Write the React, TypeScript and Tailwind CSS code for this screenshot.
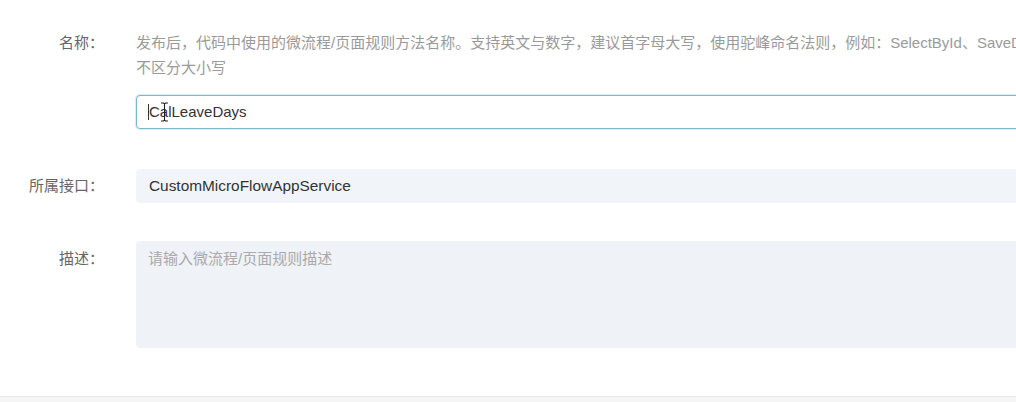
import React from 'react';

const fontStack = { fontFamily: '"Liberation Sans", "Noto Sans CJK SC", sans-serif' };

const Label: React.FC<{ text: string; className?: string }> = ({ text, className }) => (
  <div className={`w-[104px] shrink-0 text-right text-[15px] text-[#666] ${className ?? ''}`}>{text}</div>
);

// mouse text cursor hovering over the name input
const IBeam: React.FC = () => (
  <svg className="absolute left-[23px] top-[6px]" width="9" height="20" viewBox="0 0 9 20" fill="none">
    <path d="M1 1h2.5L4.5 2 5.5 1H8M4.5 2v16M1 19h2.5l1-1 1 1H8" stroke="#222" strokeWidth="1.1" />
  </svg>
);

const App: React.FC = () => {
  return (
    <div className="w-[1016px] h-[402px] overflow-hidden bg-white flex flex-col" style={fontStack}>
      <div className="flex-1 pt-[30px]">
        {/* 名称 */}
        <div className="flex">
          <Label text="名称：" className="leading-[25px]" />
          <div className="ml-[32px] w-[880px] shrink-0 overflow-hidden">
            <p className="text-[15px] leading-[25px] text-[#9a9a9a] whitespace-nowrap">
              发布后，代码中使用的微流程/页面规则方法名称。支持英文与数字，建议首字母大写，使用驼峰命名法则，例如：SelectById、SaveData，
            </p>
            <p className="text-[15px] leading-[25px] text-[#9a9a9a]">不区分大小写</p>
          </div>
        </div>
        <div className="ml-[136px] w-[1000px] relative mt-[15px] h-[34px] border border-[#79b6c8] rounded-[4px] bg-white flex items-center pl-[11px] shadow-[0_0_0_1px_rgba(121,182,200,0.25)]">
          <span className="w-px h-[16px] bg-[#333]" />
          <span className="text-[15px] text-[#333]">CalLeaveDays</span>
          <IBeam />
        </div>

        {/* 所属接口 */}
        <div className="flex items-center mt-[40px]">
          <Label text="所属接口：" />
          <div className="ml-[32px] w-[1000px] shrink-0 h-[34px] rounded-[4px] bg-[#f1f4f8] flex items-center pl-[13px] text-[15.4px] text-[#333]">
            CustomMicroFlowAppService
          </div>
        </div>

        {/* 描述 */}
        <div className="flex mt-[38px]">
          <Label text="描述：" className="pt-[8px] leading-[20px]" />
          <div className="ml-[32px] w-[1000px] shrink-0 h-[107px] rounded-[4px] bg-[#eff2f7] pl-[12px] pt-[8px] text-[15px] leading-[20px] text-[#aaa]">
            请输入微流程/页面规则描述
          </div>
        </div>
      </div>
      <div className="h-[6px] border-t border-[#e8e8e8] bg-[#f5f5f5]" />
    </div>
  );
};

export default App;
